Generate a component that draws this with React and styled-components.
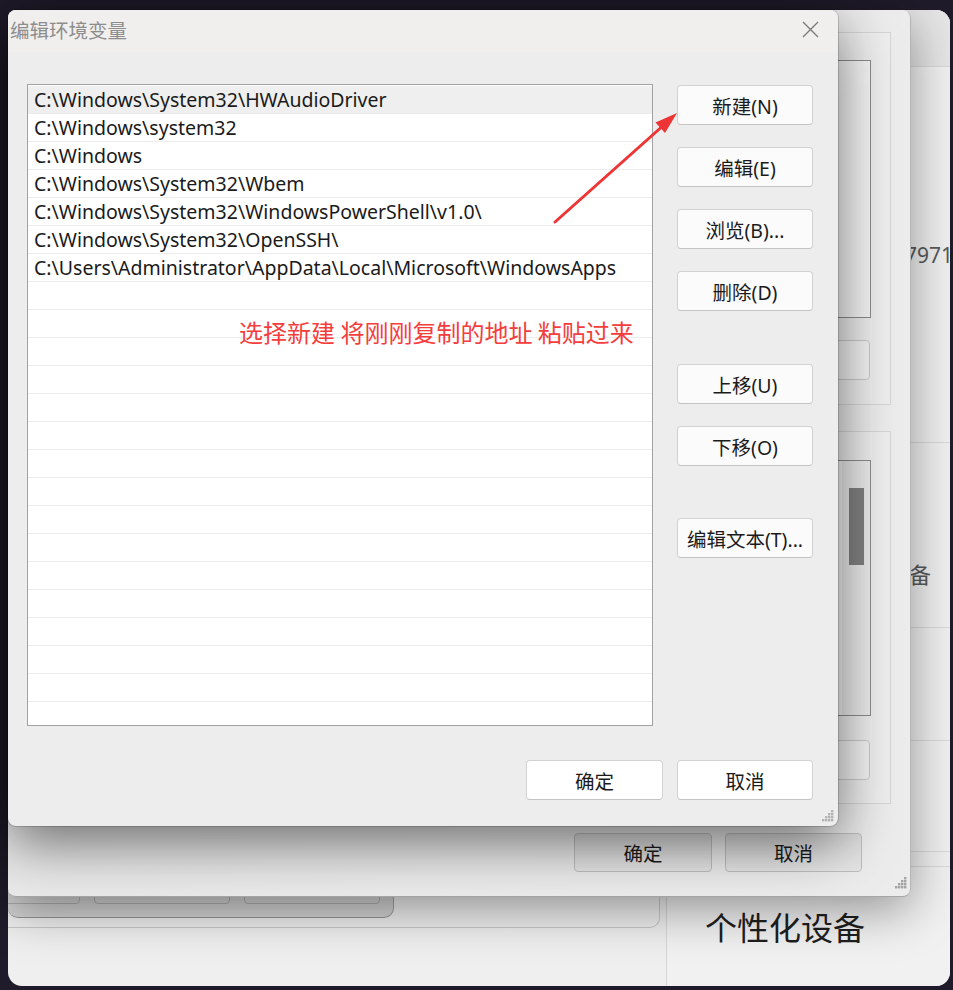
import React from "react";
import styled, { createGlobalStyle } from "styled-components";

const Global = createGlobalStyle`
  html, body { margin: 0; padding: 0; background: #201b2a; }
  body { font-family: "Noto Sans", "Noto Sans CJK SC", sans-serif; }
  #root { width: 953px; height: 990px; }
`;

const Desktop = styled.div`
  position: relative;
  width: 953px;
  height: 990px;
  overflow: hidden;
  background: #201b2a;
`;

const WindowFrame = styled.div`
  position: absolute;
  left: ${(p) => p.$x}px;
  top: ${(p) => p.$y}px;
  width: ${(p) => p.$w}px;
  height: ${(p) => p.$h}px;
  box-sizing: border-box;
  overflow: hidden;
`;

/* ---------- back settings window ---------- */
const SettingsWindow = styled(WindowFrame)`
  border-radius: 14px;
  background: linear-gradient(180deg, #ececec 0%, #efefef 100%);
  display: grid;
  grid-template-columns: 658px 1fr;
`;

const SettingsLeft = styled.div`
  display: flex;
  flex-direction: column;
  justify-content: flex-end;
  padding: 0 6px 58px 0;
`;

const OutlineCard = styled.div`
  height: 300px;
  border: 1px solid #c9c9c9;
  border-left: none;
  border-radius: 0 0 10px 0;
  background: transparent;
`;

const SettingsRight = styled.div`
  display: flex;
  flex-direction: column;
  border-left: 1px solid #d6d6d6;
  background: #f1f1f1;
`;

const PaneHeader = styled.div`
  height: 57px;
  box-sizing: border-box;
  background: #e6e6e6;
  border-bottom: 1px solid #d8d8d8;
  flex: none;
`;

const PaneRow = styled.div`
  height: ${(p) => p.$h}px;
  box-sizing: border-box;
  flex: none;
  display: flex;
  align-items: center;
  padding-left: ${(p) => p.$pad || 0}px;
  padding-top: ${(p) => p.$pt || 0}px;
  border-bottom: ${(p) => (p.$noLine ? "none" : "1px solid #dadada")};
  font-size: ${(p) => p.$fs || 22}px;
  color: ${(p) => p.$color || "#5a5a5a"};
  white-space: nowrap;
`;

/* ---------- system properties window (bottom-left) ---------- */
const PropsWindow = styled(WindowFrame)`
  border-radius: 0 0 10px 10px;
  background: linear-gradient(180deg, #c6c6c6 0%, #d4d4d4 100%);
  border-bottom: 1px solid #959595;
  border-right: 1px solid #a3a3a3;
  display: flex;
  align-items: flex-end;
  justify-content: flex-end;
  gap: 14px;
  padding: 0 13px 13px 0;
`;

const FadedButton = styled.div`
  flex: none;
  width: 136px;
  height: 30px;
  box-sizing: border-box;
  border: 1px solid #b0b0b0;
  border-radius: 4px;
  background: #d4d4d4;
`;

/* ---------- environment variables window ---------- */
const EnvWindow = styled(WindowFrame)`
  border-radius: 8px;
  background: linear-gradient(90deg, #e9e9e9 0%, #ececec 100%);
  border-right: 1px solid #b5b5b5;
  border-bottom: 1px solid #a6a6a6;
  box-shadow: 0 12px 50px rgba(0, 0, 0, 0.4);
  display: flex;
  flex-direction: column;
  align-items: flex-end;
  padding: 22px 19px 23px 20px;
`;

const GroupBox = styled.div`
  width: 860px;
  height: 373px;
  box-sizing: border-box;
  flex: none;
  margin-top: ${(p) => p.$mt || 0}px;
  border: 1px solid #d6d6d6;
  background: #eeeeee;
  display: flex;
  flex-direction: column;
  align-items: flex-end;
  gap: ${(p) => p.$gap}px;
  padding: ${(p) => p.$pt}px 19px 0 0;
`;

const EnvList = styled.div`
  width: 820px;
  height: ${(p) => p.$h}px;
  box-sizing: border-box;
  flex: none;
  border: 1px solid #8c8c8c;
  background: linear-gradient(90deg, #ffffff 0%, #f6f6f6 100%);
  display: flex;
  justify-content: flex-end;
`;

const ScrollTrack = styled.div`
  width: 22px;
  background: #ececec;
  padding-top: 27px;
  display: flex;
  justify-content: flex-end;
  padding-right: 6px;
`;

const ScrollThumb = styled.div`
  width: 15px;
  height: 77px;
  background: #828282;
`;

const EnvButton = styled.div`
  flex: none;
  width: 136px;
  height: 40px;
  box-sizing: border-box;
  border: 1px solid #cbcbcb;
  border-radius: 4px;
  background: #f3f3f3;
  margin-right: 1px;
`;

const EnvFooter = styled.div`
  display: flex;
  gap: 13px;
  margin-top: 29px;
  margin-right: 29px;
`;

const DimButton = styled.div`
  width: ${(p) => p.$w}px;
  height: 39px;
  box-sizing: border-box;
  border: 1px solid #bebebe;
  border-radius: 4px;
  background: linear-gradient(180deg, #dcdcdc 0%, #e6e6e6 100%);
  display: flex;
  align-items: center;
  justify-content: center;
  font-size: 19.5px;
  color: #1a1a1a;
`;

const Grip = styled.svg`
  position: absolute;
  right: ${(p) => p.$r}px;
  bottom: ${(p) => p.$b}px;
`;

/* ---------- edit environment variable dialog ---------- */
const EditDialog = styled(WindowFrame)`
  border-radius: 8px;
  background: #ecedec;
  box-shadow: 0 16px 56px rgba(0, 0, 0, 0.55), 0 0 0 1px rgba(0, 0, 0, 0.16);
  display: flex;
  flex-direction: column;
`;

const TitleBar = styled.div`
  height: 42px;
  box-sizing: border-box;
  flex: none;
  background: #f0efee;
  display: flex;
  align-items: center;
  justify-content: space-between;
  padding: 0 19px 4px 2px;
`;

const TitleText = styled.span`
  font-size: 19.5px;
  color: #8d8d8d;
  font-family: "Noto Sans CJK SC", sans-serif;
`;

const DialogBody = styled.div`
  flex: 1;
  display: flex;
  flex-direction: column;
  padding: 32px 25px 26px 19px;
`;

const MainArea = styled.div`
  display: flex;
  gap: 24px;
  height: 642px;
`;

const PathList = styled.div`
  width: 626px;
  height: 642px;
  box-sizing: border-box;
  border: 1px solid #a2a2a2;
  background: #ffffff;
  padding-top: 1px;
  overflow: hidden;
`;

const PathRow = styled.div`
  height: 28px;
  box-sizing: border-box;
  border-bottom: 1px solid #ececec;
  background: ${(p) => (p.$selected ? "#efefef" : "transparent")};
  padding-left: 6px;
  font-size: 19.5px;
  line-height: 27px;
  color: #1a1a1a;
  white-space: nowrap;
`;

const ButtonColumn = styled.div`
  display: flex;
  flex-direction: column;
  width: 136px;
  padding-top: 1px;
`;

const DialogButton = styled.button`
  width: ${(p) => p.$w || 136}px;
  height: 40px;
  flex: none;
  margin-top: ${(p) => p.$mt || 0}px;
  box-sizing: border-box;
  border: 1px solid #d2d2d2;
  border-bottom-color: #c4c4c4;
  border-radius: 4px;
  background: ${(p) => (p.$white ? "#ffffff" : "#fbfbfb")};
  font-family: "Noto Sans", "Noto Sans CJK SC", sans-serif;
  font-size: 19.5px;
  color: #1b1b1b;
  padding: 0;
  display: flex;
  align-items: center;
  justify-content: center;
`;

const DialogFooter = styled.div`
  display: flex;
  justify-content: flex-end;
  gap: 14px;
  margin-top: 34px;
`;

/* ---------- annotation ---------- */
const Annotation = styled.div`
  position: absolute;
  left: 239px;
  top: 314px;
  font-family: "Noto Sans CJK SC", sans-serif;
  font-size: 24px;
  color: #f43d3d;
  white-space: nowrap;
`;

const ArrowSvg = styled.svg`
  position: absolute;
  left: 0;
  top: 0;
  pointer-events: none;
`;

const paths = [
  "C:\\Windows\\System32\\HWAudioDriver",
  "C:\\Windows\\system32",
  "C:\\Windows",
  "C:\\Windows\\System32\\Wbem",
  "C:\\Windows\\System32\\WindowsPowerShell\\v1.0\\",
  "C:\\Windows\\System32\\OpenSSH\\",
  "C:\\Users\\Administrator\\AppData\\Local\\Microsoft\\WindowsApps",
];

const sideButtons = [
  { label: "新建(N)", mt: 0 },
  { label: "编辑(E)", mt: 22 },
  { label: "浏览(B)...", mt: 22 },
  { label: "删除(D)", mt: 22 },
  { label: "上移(U)", mt: 53 },
  { label: "下移(O)", mt: 22 },
  { label: "编辑文本(T)...", mt: 52 },
];

const GripIcon = ({ r, b, color }) => (
  <Grip $r={r} $b={b} width="12" height="12" viewBox="0 0 12 12">
    {[
      [9, 0], [6, 3], [9, 3], [3, 6], [6, 6], [9, 6], [0, 9], [3, 9], [6, 9], [9, 9],
    ].map(([x, y], i) => (
      <rect key={i} x={x} y={y} width="2.4" height="2.4" fill={color} />
    ))}
  </Grip>
);

export default function App() {
  const rows = Array.from({ length: 24 }, (_, i) => paths[i] || "");
  return (
    <Desktop>
      <Global />

      <SettingsWindow $x={8} $y={10} $w={942} $h={976}>
        <SettingsLeft>
          <OutlineCard />
        </SettingsLeft>
        <SettingsRight>
          <PaneHeader />
          <PaneRow $h={376} $pad={238} $fs={21}>
            7971
          </PaneRow>
          <PaneRow $h={185} $pad={220} $pt={76}>
            设备
          </PaneRow>
          <PaneRow $h={113} />
          <PaneRow $h={111} />
          <PaneRow $h={15} />
          <PaneRow $h={118} $pad={38} $fs={32} $color="#1f1f1f" $noLine>
            个性化设备
          </PaneRow>
        </SettingsRight>
      </SettingsWindow>

      <PropsWindow $x={8} $y={600} $w={386} $h={318}>
        <FadedButton />
        <FadedButton />
        <FadedButton />
      </PropsWindow>

      <EnvWindow $x={8} $y={10} $w={903} $h={887}>
        <GroupBox $pt={27} $gap={22}>
          <EnvList $h={258} />
          <EnvButton />
        </GroupBox>
        <GroupBox $mt={26} $pt={28} $gap={24}>
          <EnvList $h={256}>
            <ScrollTrack>
              <ScrollThumb />
            </ScrollTrack>
          </EnvList>
          <EnvButton />
        </GroupBox>
        <EnvFooter>
          <DimButton $w={138}>确定</DimButton>
          <DimButton $w={137}>取消</DimButton>
        </EnvFooter>
        <GripIcon r={3} b={7} color="#a4a4a4" />
      </EnvWindow>

      <EditDialog $x={8} $y={10} $w={830} $h={816}>
        <TitleBar>
          <TitleText>编辑环境变量</TitleText>
          <svg width="17" height="17" viewBox="0 0 17 17">
            <path d="M1 1 L16 16 M16 1 L1 16" stroke="#7b7b7b" strokeWidth="1.4" fill="none" />
          </svg>
        </TitleBar>
        <DialogBody>
          <MainArea>
            <PathList>
              {rows.map((p, i) => (
                <PathRow key={i} $selected={i === 0}>
                  {p}
                </PathRow>
              ))}
            </PathList>
            <ButtonColumn>
              {sideButtons.map((b) => (
                <DialogButton key={b.label} $mt={b.mt}>
                  {b.label}
                </DialogButton>
              ))}
            </ButtonColumn>
          </MainArea>
          <DialogFooter>
            <DialogButton $w={137} $white>
              确定
            </DialogButton>
            <DialogButton $w={136} $white>
              取消
            </DialogButton>
          </DialogFooter>
        </DialogBody>
        <GripIcon r={4} b={4} color="#b4b4b4" />
      </EditDialog>

      <Annotation>选择新建 将刚刚复制的地址 粘贴过来</Annotation>
      <ArrowSvg width="953" height="990" viewBox="0 0 953 990">
        <line x1="555" y1="222" x2="661" y2="127.5" stroke="#ee3434" strokeWidth="3" strokeLinecap="round" />
        <polygon points="677,113 665,133 655.5,122.5" fill="#ee3434" />
      </ArrowSvg>
    </Desktop>
  );
}
